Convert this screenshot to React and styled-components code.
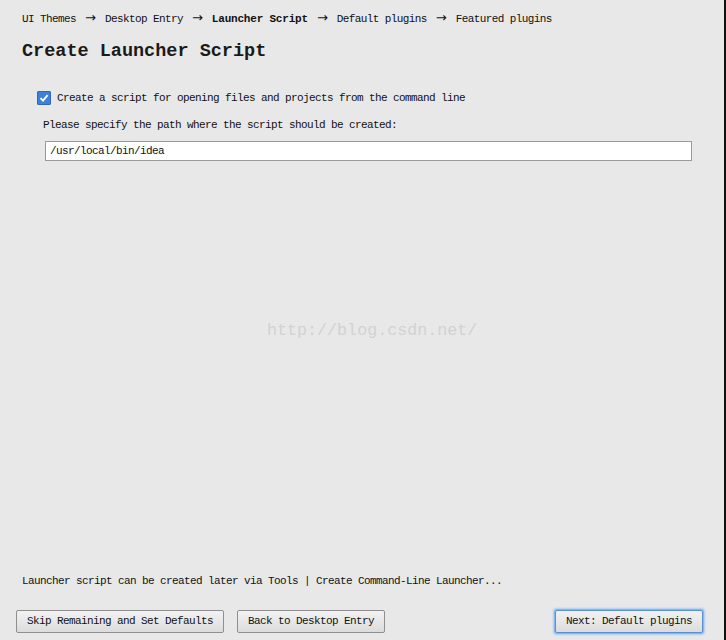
import React from 'react';
import styled, { createGlobalStyle } from 'styled-components';

const Global = createGlobalStyle`
  html, body { margin: 0; padding: 0; background: #e8e8e8; }
  #root { height: 100vh; }
`;

const Window = styled.div`
  position: relative;
  box-sizing: border-box;
  height: 100vh;
  background: #e8e8e8;
  border-right: 2px solid #111;
  display: flex;
  flex-direction: column;
  font-family: "Liberation Mono", monospace;
  font-size: 11px;
  letter-spacing: -0.6px;
  color: #111;
`;

const Crumbs = styled.div`
  padding: 11px 0 0 22px;
  line-height: 14px;
  white-space: nowrap;
`;

const Crumb = styled.span`
  font-weight: ${p => (p.active ? 'bold' : 'normal')};
  letter-spacing: ${p => (p.active ? '-0.2px' : '-0.6px')};
`;

const Arrow = styled.span`
  font-family: "DejaVu Sans", sans-serif;
  font-size: 13px;
  letter-spacing: 0;
  margin: 0 9px;
`;

const Title = styled.h1`
  margin: 15px 0 0 22px;
  font-size: 18.5px;
  line-height: 22px;
  font-weight: bold;
  letter-spacing: 0;
  color: #1a1a1a;
`;

const Body = styled.div`
  flex: 1;
  padding: 28px 32px 0 37px;
  display: flex;
  flex-direction: column;
`;

const CheckRow = styled.label`
  display: flex;
  align-items: center;
  gap: 6px;
  line-height: 14px;
`;

const Box = styled.span`
  width: 14px;
  height: 14px;
  border-radius: 2px;
  background: #3d7fd9;
  box-shadow: inset 0 0 0 1px #2f68b8;
  display: flex;
  align-items: center;
  justify-content: center;
`;

const Hint = styled.div`
  margin: 13px 0 0 6px;
  line-height: 14px;
`;

const PathField = styled.div`
  margin: 9px 0 0 8px;
  height: 20px;
  box-sizing: border-box;
  background: #fff;
  border: 1px solid #9a9a9a;
  padding-left: 4px;
  line-height: 18px;
`;

const Footer = styled.div`
  padding: 0 0 7px 16px;
`;

const Note = styled.div`
  margin-left: 6px;
  line-height: 14px;
`;

const Buttons = styled.div`
  display: flex;
  gap: 13px;
  margin-top: 22px;
  padding-right: 21px;
`;

const Button = styled.div`
  height: 23px;
  box-sizing: border-box;
  padding: 0 10px;
  line-height: 21px;
  border: 1px solid #8f8f8f;
  border-radius: 2px;
  background: linear-gradient(#f2f2f2, #dcdcdc);
  white-space: nowrap;
  margin-left: ${p => (p.push ? 'auto' : '0')};
  box-shadow: ${p => (p.focus ? '0 0 0 1px #8ab8ee, 0 0 2px 2px #a9cdf3' : 'none')};
  border-color: ${p => (p.focus ? '#5a8fd0' : '#8f8f8f')};
`;

const Watermark = styled.div`
  position: absolute;
  left: 267px;
  top: 321px;
  font-size: 16.7px;
  letter-spacing: 0;
  color: #d2d2d2;
  line-height: 20px;
`;

const crumbs = ['UI Themes', 'Desktop Entry', 'Launcher Script', 'Default plugins', 'Featured plugins'];

export default function App() {
  return (
    <Window>
      <Global />
      <Crumbs>
        {crumbs.map((c, i) => (
          <React.Fragment key={c}>
            {i > 0 && <Arrow>→</Arrow>}
            <Crumb active={c === 'Launcher Script'}>{c}</Crumb>
          </React.Fragment>
        ))}
      </Crumbs>
      <Title>Create Launcher Script</Title>
      <Body>
        <CheckRow>
          <Box>
            <svg width="10" height="10" viewBox="0 0 10 10">
              <path d="M1.5 5.2 L4 7.6 L8.6 2.2" fill="none" stroke="#fff" strokeWidth="1.8" />
            </svg>
          </Box>
          Create a script for opening files and projects from the command line
        </CheckRow>
        <Hint>Please specify the path where the script should be created:</Hint>
        <PathField>/usr/local/bin/idea</PathField>
      </Body>
      <Footer>
        <Note>Launcher script can be created later via Tools | Create Command-Line Launcher...</Note>
        <Buttons>
          <Button>Skip Remaining and Set Defaults</Button>
          <Button>Back to Desktop Entry</Button>
          <Button push focus>Next: Default plugins</Button>
        </Buttons>
      </Footer>
      <Watermark>http://blog.csdn.net/</Watermark>
    </Window>
  );
}
